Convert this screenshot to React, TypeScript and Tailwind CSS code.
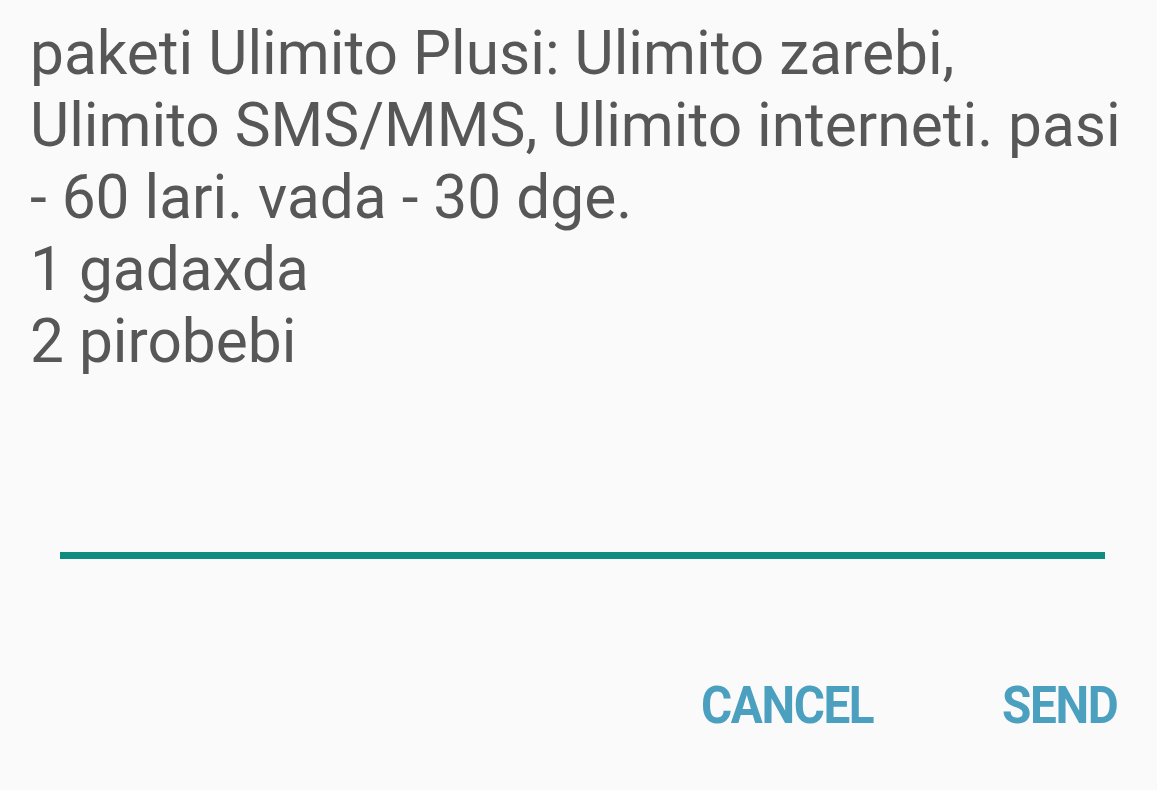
import React from 'react';

export default function App() {
  const lines = [
    'paketi Ulimito Plusi: Ulimito zarebi,',
    'Ulimito SMS/MMS, Ulimito interneti. pasi',
    '- 60 lari. vada - 30 dge.',
    '1 gadaxda',
    '2 pirobebi',
  ];

  return (
    <div className="w-[1157px] h-[790px] bg-[#fafafa] flex flex-col" style={{ fontFamily: 'Roboto, "Noto Sans", sans-serif' }}>
      <div className="pl-[30px] pt-[18px] text-[60.4px] leading-[72px] text-[#575757]">
        {lines.map((l) => (
          <div key={l} className="whitespace-nowrap">{l}</div>
        ))}
      </div>
      <div className="mt-[174px] mr-[52px] ml-[60px] h-[7px] bg-[#0f8c80]" />
      <div className="mt-[121px] flex justify-end items-center gap-[121px] pr-[40px]">
        <button className="text-[51px] font-bold tracking-[-1.5px] text-[#4ba0c0] leading-none scale-x-[0.935] origin-right">CANCEL</button>
        <button className="text-[51px] font-bold tracking-[-1.5px] text-[#4ba0c0] leading-none scale-x-[0.935] origin-right">SEND</button>
      </div>
    </div>
  );
}
